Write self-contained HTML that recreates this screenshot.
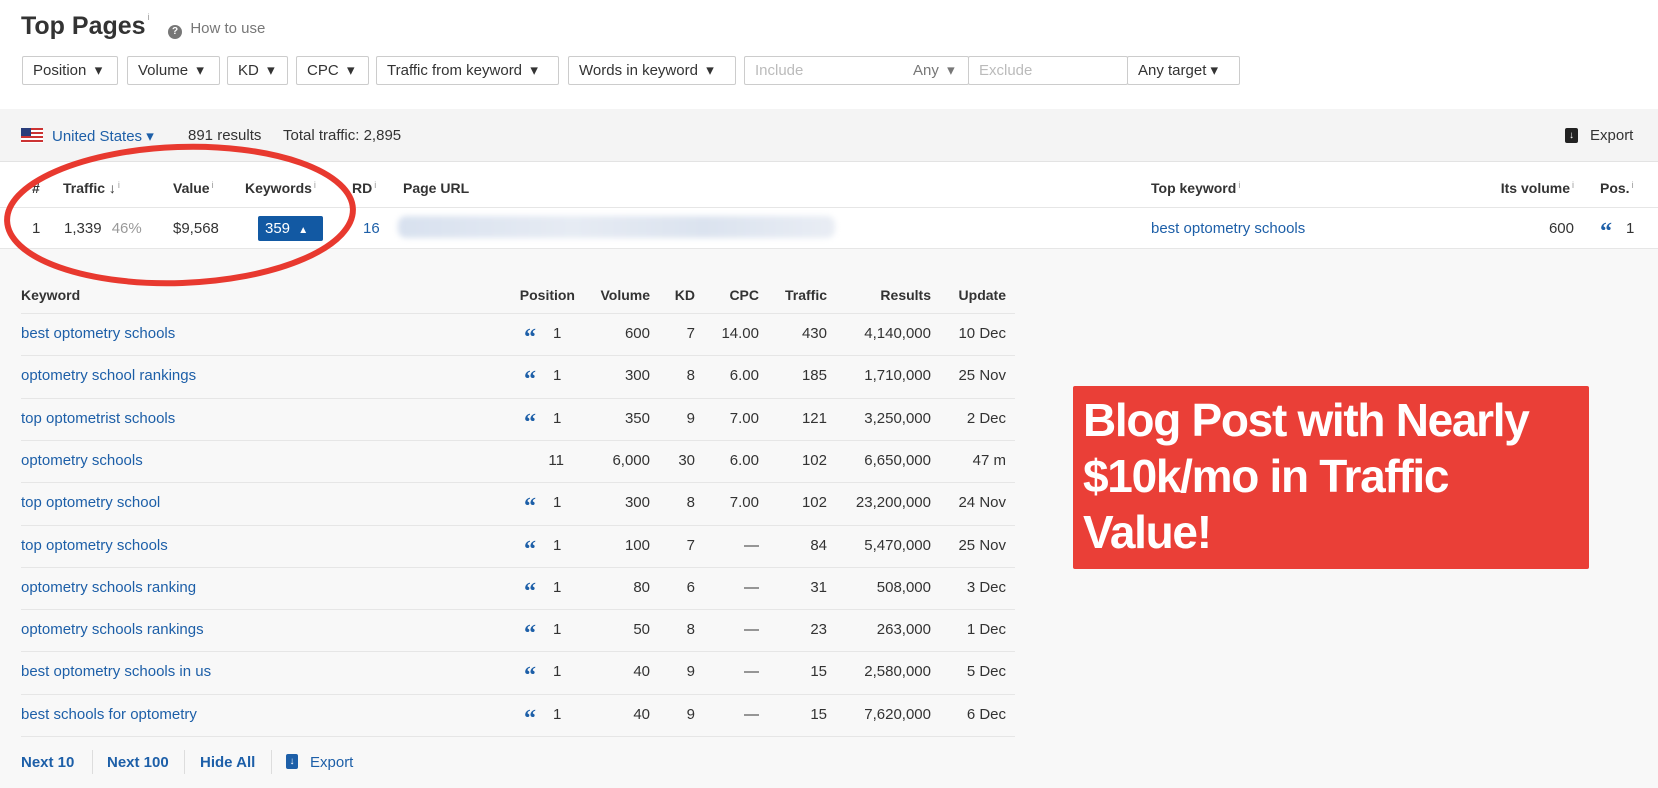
<!DOCTYPE html>
<html><head><meta charset="utf-8"><style>
*{margin:0;padding:0;box-sizing:border-box}
body{width:1658px;height:788px;overflow:hidden;background:#fff;font-family:"Liberation Sans",Arial,sans-serif;font-size:15px;color:#333;position:relative}
.a{position:absolute;white-space:nowrap}
.btn{position:absolute;top:56px;height:29px;border:1px solid #ccc;border-radius:2px;background:#fff;line-height:27px;padding-left:10px;font-size:15px;color:#333}
.blue{color:#1d5fa8}
.b{font-weight:bold;font-size:14px;color:#333}
sup{font-size:9px;color:#999;font-weight:normal;vertical-align:top;margin-left:2px}
.row{position:absolute;left:21px;width:994px;height:42px;border-top:1px solid #e6e6e6}
.r{position:absolute;text-align:right;white-space:nowrap}
.q{color:#1d5fa8;font-weight:bold;font-family:"Liberation Serif",serif;font-size:24px;line-height:24px}
</style></head><body>
<div class="a" style="left:21px;top:12px;font-size:25px;font-weight:bold;color:#333">Top Pages<sup>i</sup></div>
<div class="a" style="left:168px;top:20px;color:#777;font-size:15px"><span style="display:inline-block;width:14px;height:14px;border-radius:50%;background:#777;color:#fff;font-size:10px;text-align:center;line-height:14px;font-weight:bold;vertical-align:-1px">?</span>&nbsp; How to use</div>

<div class="btn" style="left:22px;width:96px">Position &nbsp;▾</div>
<div class="btn" style="left:127px;width:93px">Volume &nbsp;▾</div>
<div class="btn" style="left:227px;width:61px">KD &nbsp;▾</div>
<div class="btn" style="left:296px;width:73px">CPC &nbsp;▾</div>
<div class="btn" style="left:376px;width:183px">Traffic from keyword &nbsp;▾</div>
<div class="btn" style="left:568px;width:168px">Words in keyword &nbsp;▾</div>
<div class="btn" style="left:744px;width:225px;color:#bbb">Include<span style="position:absolute;left:168px;color:#777">Any &nbsp;▾</span></div>
<div class="btn" style="left:968px;width:160px;color:#bbb">Exclude</div>
<div class="btn" style="left:1127px;width:113px">Any target ▾</div>

<div class="a" style="left:0;top:109px;width:1658px;height:53px;background:#f4f4f4;border-bottom:1px solid #e3e3e3"></div>
<div class="a" style="left:21px;top:128px;width:22px;height:15px;background:repeating-linear-gradient(#c33 0 2px,#fff 2px 4px)"><div style="width:10px;height:8px;background:#2a3c7a"></div></div>
<div class="a blue" style="left:52px;top:127px">United States ▾</div>
<div class="a" style="left:188px;top:127px">891 results</div>
<div class="a" style="left:283px;top:127px">Total traffic: 2,895</div>
<div class="a" style="left:1565px;top:128px;width:13px;height:15px;background:#222;border-radius:2px;color:#fff;font-size:10px;text-align:center;line-height:15px;font-weight:bold">↓</div>
<div class="a" style="left:1590px;top:127px">Export</div>

<div class="a b" style="left:32px;top:180px">#</div>
<div class="a b" style="left:63px;top:180px">Traffic ↓<sup>i</sup></div>
<div class="a b" style="left:173px;top:180px">Value<sup>i</sup></div>
<div class="a b" style="left:245px;top:180px">Keywords<sup>i</sup></div>
<div class="a b" style="left:352px;top:180px">RD<sup>i</sup></div>
<div class="a b" style="left:403px;top:180px">Page URL</div>
<div class="a b" style="left:1151px;top:180px">Top keyword<sup>i</sup></div>
<div class="r b" style="right:84px;top:180px">Its volume<sup>i</sup></div>
<div class="a b" style="left:1600px;top:180px">Pos.<sup>i</sup></div>
<div class="a" style="left:0;top:207px;width:1658px;border-top:1px solid #e6e6e6"></div>
<div class="a" style="left:32px;top:220px">1</div>
<div class="a" style="left:64px;top:220px">1,339 <span style="color:#999;margin-left:6px">46%</span></div>
<div class="a" style="left:173px;top:220px">$9,568</div>
<div class="a" style="left:258px;top:216px;width:65px;height:25px;background:#1259a3;color:#fff;border-radius:2px;line-height:25px;padding-left:7px">359 <span style="font-size:10px;margin-left:4px">▲</span></div>
<div class="a blue" style="left:363px;top:220px">16</div>
<div class="a" style="left:398px;top:216px;width:437px;height:22px;background:linear-gradient(90deg,#d8e1ef,#e6ebf3 40%,#dbe3ef 70%,#e9edf4);border-radius:8px;filter:blur(3px)"></div>
<div class="a blue" style="left:1151px;top:220px">best optometry schools</div>
<div class="r" style="right:84px;top:220px">600</div>
<div class="a q" style="left:1600px;top:220px">“</div>
<div class="a" style="left:1626px;top:220px">1</div>
<div class="a" style="left:0;top:248px;width:1658px;height:540px;background:#f8f8f8;border-top:1px solid #e6e6e6"></div>

<svg class="a" style="left:0;top:135px" width="380" height="160"><ellipse cx="180" cy="80" rx="173" ry="68" fill="none" stroke="#e8392f" stroke-width="6" transform="rotate(-2 180 80)"/></svg>

<div id="kt" class="a" style="left:0;top:0"></div>
<div class="a b" style="left:21px;top:287px;font-weight:bold">Keyword</div>
<div class="r b" style="left:510px;width:65px;top:287px">Position</div>
<div class="r b" style="left:590px;width:60px;top:287px">Volume</div>
<div class="r b" style="left:660px;width:35px;top:287px">KD</div>
<div class="r b" style="left:710px;width:49px;top:287px">CPC</div>
<div class="r b" style="left:770px;width:57px;top:287px">Traffic</div>
<div class="r b" style="left:850px;width:81px;top:287px">Results</div>
<div class="r b" style="left:940px;width:66px;top:287px">Update</div>

<script>
var d=[["best optometry schools",1,"600","7","14.00","430","4,140,000","10 Dec"],
["optometry school rankings",1,"300","8","6.00","185","1,710,000","25 Nov"],
["top optometrist schools",1,"350","9","7.00","121","3,250,000","2 Dec"],
["optometry schools",0,"6,000","30","6.00","102","6,650,000","47 m"],
["top optometry school",1,"300","8","7.00","102","23,200,000","24 Nov"],
["top optometry schools",1,"100","7","—","84","5,470,000","25 Nov"],
["optometry schools ranking",1,"80","6","—","31","508,000","3 Dec"],
["optometry schools rankings",1,"50","8","—","23","263,000","1 Dec"],
["best optometry schools in us",1,"40","9","—","15","2,580,000","5 Dec"],
["best schools for optometry",1,"40","9","—","15","7,620,000","6 Dec"]];
var h="";
for(var i=0;i<d.length;i++){var t=313+i*42.3,y=t+12;var r=d[i];
h+='<div class="row" style="top:'+t+'px"></div>';
h+='<div class="a blue" style="left:21px;top:'+y+'px">'+r[0]+'</div>';
if(r[1])h+='<div class="a q" style="left:524px;top:'+(y+1)+'px">“</div><div class="a" style="left:553px;top:'+y+'px">1</div>';
else h+='<div class="r" style="left:510px;width:54px;top:'+y+'px">11</div>';
var cols=[[590,60],[660,35],[710,49],[770,57],[850,81],[940,66]];
for(var c=0;c<6;c++)h+='<div class="r" style="left:'+cols[c][0]+'px;width:'+cols[c][1]+'px;top:'+y+'px">'+r[c+2]+'</div>';}
h+='<div class="row" style="top:736px;height:1px"></div>';
document.getElementById("kt").innerHTML=h;
</script>

<div class="a blue" style="left:21px;top:754px;font-weight:bold;font-size:15px">Next 10</div>
<div class="a" style="left:92px;top:750px;height:24px;border-left:1px solid #ddd"></div>
<div class="a blue" style="left:107px;top:754px;font-weight:bold">Next 100</div>
<div class="a" style="left:184px;top:750px;height:24px;border-left:1px solid #ddd"></div>
<div class="a blue" style="left:200px;top:754px;font-weight:bold">Hide All</div>
<div class="a" style="left:271px;top:750px;height:24px;border-left:1px solid #ddd"></div>
<div class="a" style="left:286px;top:754px;width:12px;height:15px;background:#1d5fa8;border-radius:2px;color:#fff;font-size:10px;text-align:center;line-height:15px;font-weight:bold">↓</div>
<div class="a blue" style="left:310px;top:754px">Export</div>

<div class="a" style="left:1073px;top:386px;width:516px;height:183px;background:#ea3f37;border-radius:2px"></div>
<div class="a" style="left:1083px;top:392px;color:#fff;font-weight:bold;font-size:46px;line-height:56px;letter-spacing:-1.3px;white-space:normal;width:505px">Blog Post with Nearly<br>$10k/mo in Traffic<br>Value!</div>
</body></html>
